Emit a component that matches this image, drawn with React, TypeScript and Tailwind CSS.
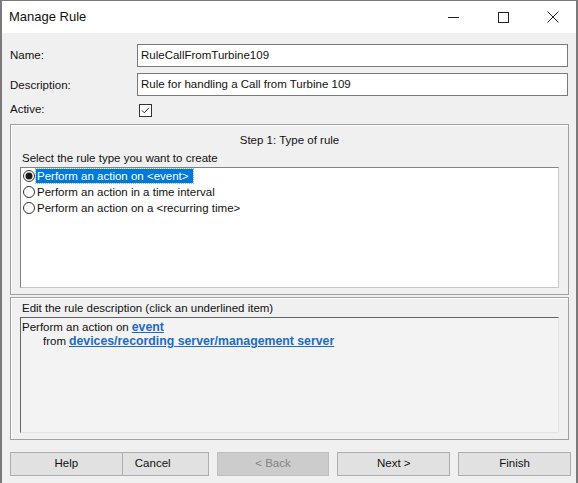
import React from "react";

function Radio({ checked }: { checked?: boolean }) {
  return (
    <svg width="12" height="12" viewBox="0 0 12 12" className="shrink-0">
      <circle cx="6" cy="6" r="5.5" fill="#fff" stroke="#333" strokeWidth="1" />
      {checked && <circle cx="6" cy="6" r="3.5" fill="#1a1a1a" />}
    </svg>
  );
}

export default function App() {
  const font = { fontFamily: '"Liberation Sans", Arial, sans-serif' };
  return (
    <div
      className="w-[578px] h-[483px] bg-[#f0f0f0] border-x-2 border-t border-[#7a7a7a] flex flex-col text-[11.5px] text-[#111] overflow-hidden"
      style={font}
    >
      {/* Title bar */}
      <div className="h-[32px] bg-white flex items-center shrink-0">
        <div className="pl-[7px] text-[13px] text-[#111] flex-1">Manage Rule</div>
        <div className="flex items-center h-full">
          <div className="w-[46px] h-full flex items-center justify-center">
            <div className="w-[11px] h-px bg-[#222]" />
          </div>
          <div className="w-[46px] h-full flex items-center justify-center mx-[4px]">
            <div className="w-[11px] h-[11px] border border-[#222]" />
          </div>
          <div className="w-[46px] h-full flex items-center justify-center">
            <svg width="12" height="12" viewBox="0 0 12 12">
              <path d="M0.5 0.5 L11.5 11.5 M11.5 0.5 L0.5 11.5" stroke="#222" strokeWidth="1" />
            </svg>
          </div>
        </div>
      </div>

      <div className="px-[8px] flex flex-col">
        {/* Name */}
        <div className="flex items-center mt-[11px] h-[23px]">
          <div className="w-[127px]">Name:</div>
          <div className="flex-1 h-[23px] bg-white border border-[#7a7a7a] flex items-center pl-[3px]">
            RuleCallFromTurbine109
          </div>
        </div>
        {/* Description */}
        <div className="flex items-center mt-[6px] h-[23px]">
          <div className="w-[127px] pt-[3px]">Description:</div>
          <div className="flex-1 h-[23px] bg-white border border-[#7a7a7a] flex items-start pt-[2px] pl-[3px]">
            Rule for handling a Call from Turbine 109
          </div>
        </div>
        {/* Active */}
        <div className="flex items-center mt-[7px] h-[14px]">
          <div className="w-[129px]">Active:</div>
          <div className="w-[13px] h-[13px] border border-[#333] bg-white flex items-center justify-center">
            <svg width="11" height="11" viewBox="0 0 11 11">
              <path d="M2 5.5 L4.3 7.8 L9 2.8" fill="none" stroke="#222" strokeWidth="1" />
            </svg>
          </div>
        </div>

        {/* Group 1 */}
        <div className="mt-[7px] w-[559px] h-[171px] border border-[#a0a0a0] shadow-[inset_1px_1px_0_#fff] flex flex-col px-[9px]">
          <div className="text-center mt-[8px] leading-[14px]">Step 1: Type of rule</div>
          <div className="mt-[4px] pl-[2px] leading-[14px]">Select the rule type you want to create</div>
          <div className="mt-[2px] w-[539px] h-[121px] bg-white border border-[#828282] border-r-[#c8c8c8] border-b-[#c8c8c8] pt-[1px] pl-[2px] flex flex-col">
            <div className="flex items-center h-[14px]">
              <Radio checked />
              <div className="ml-[1px] bg-[#0078d7] text-white px-px leading-[14px] pr-[4px] outline-1 outline-dotted outline-[#7fb7eb]">
                Perform an action on &lt;event&gt;
              </div>
            </div>
            <div className="flex items-center h-[15px] mt-px">
              <Radio />
              <div className="ml-[2px] leading-[14px]">Perform an action in a time interval</div>
            </div>
            <div className="flex items-center h-[15px] mt-px">
              <Radio />
              <div className="ml-[2px] leading-[14px]">Perform an action on a &lt;recurring time&gt;</div>
            </div>
          </div>
        </div>

        {/* Group 2 */}
        <div className="mt-[2px] w-[559px] h-[143px] border border-[#a0a0a0] shadow-[inset_1px_1px_0_#fff] flex flex-col px-[9px]">
          <div className="mt-[3px] pl-[2px] leading-[14px]">Edit the rule description (click an underlined item)</div>
          <div className="mt-[2px] w-[539px] h-[116px] bg-[#f3f3f3] border border-t-[#646464] border-l-[#646464] border-r-[#e3e3e3] border-b-[#e3e3e3] pl-[1px] pt-[2px] flex flex-col leading-[14px]">
            <div className="flex items-baseline">
              <span>Perform an action on</span>
              <span className="ml-[3px] font-bold underline text-[12.3px] text-[#1c6cc4]">event</span>
            </div>
            <div className="pl-[21px] flex items-baseline">
              <span>from</span>
              <span className="ml-[3px] font-bold underline text-[12.3px] text-[#1c6cc4]">
                devices/recording server/management server
              </span>
            </div>
          </div>
        </div>

        {/* Buttons */}
        <div className="mt-[12px] flex h-[24px] w-[561px]">
          <div className="w-[113px] h-full bg-[#e1e1e1] border border-[#adadad] flex items-center justify-center">Help</div>
          <div className="w-[86px] h-full bg-[#e1e1e1] border border-[#adadad] border-l-0 flex items-center pl-[12px]">Cancel</div>
          <div className="ml-[8px] w-[113px] h-full bg-[#cccccc] border border-[#bfbfbf] flex items-center justify-center text-[#838383]">&lt; Back</div>
          <div className="ml-[8px] w-[113px] h-full bg-[#e1e1e1] border border-[#adadad] flex items-center justify-center">Next &gt;</div>
          <div className="ml-[8px] w-[113px] h-full bg-[#e1e1e1] border border-[#adadad] flex items-center justify-center">Finish</div>
        </div>
      </div>
    </div>
  );
}
